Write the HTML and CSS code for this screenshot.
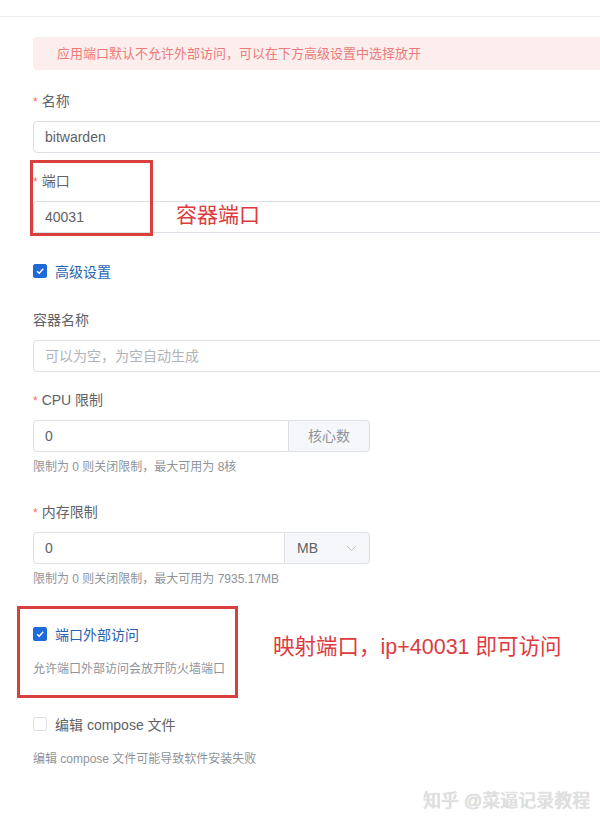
FILE: index.html
```html
<!DOCTYPE html>
<html lang="zh">
<head>
<meta charset="utf-8">
<link rel="stylesheet" href="styles.css">
</head>
<body>
<div class="topbar"></div>
<div class="page">
  <div class="alert">应用端口默认不允许外部访问，可以在下方高级设置中选择放开</div>

  <div class="item item-first">
    <div class="label"><span class="star">*</span>名称</div>
    <div class="input"><span class="val">bitwarden</span></div>
  </div>

  <div class="item">
    <div class="label"><span class="star">*</span>端口</div>
    <div class="input"><span class="val">40031</span></div>
  </div>

  <div class="check check-adv">
    <span class="box on"><svg width="10" height="10" viewBox="0 0 10 10"><path d="M2 5.2 L4.2 7.3 L8.2 2.8" fill="none" stroke="#fff" stroke-width="1.4"/></svg></span>
    <span class="check-text on">高级设置</span>
  </div>

  <div class="item item-cname">
    <div class="label">容器名称</div>
    <div class="input"><span class="ph">可以为空，为空自动生成</span></div>
  </div>

  <div class="item">
    <div class="label"><span class="star">*</span>CPU 限制</div>
    <div class="group">
      <div class="ginput"><span class="val">0</span></div>
      <div class="append">核心数</div>
    </div>
    <div class="help">限制为 0 则关闭限制，最大可用为 8核</div>
  </div>

  <div class="item item-mem">
    <div class="label"><span class="star">*</span>内存限制</div>
    <div class="group">
      <div class="ginput"><span class="val">0</span></div>
      <div class="select"><span>MB</span><svg width="11" height="7" viewBox="0 0 11 7"><path d="M1 1 L5.5 5.5 L10 1" fill="none" stroke="#c0c4cc" stroke-width="1"/></svg></div>
    </div>
    <div class="help">限制为 0 则关闭限制，最大可用为 7935.17MB</div>
  </div>

  <div class="check check-ext">
    <span class="box on"><svg width="10" height="10" viewBox="0 0 10 10"><path d="M2 5.2 L4.2 7.3 L8.2 2.8" fill="none" stroke="#fff" stroke-width="1.4"/></svg></span>
    <span class="check-text on">端口外部访问</span>
  </div>
  <div class="help help-check">允许端口外部访问会放开防火墙端口</div>

  <div class="check check-compose">
    <span class="box"></span>
    <span class="check-text">编辑 compose 文件</span>
  </div>
  <div class="help help-check">编辑 compose 文件可能导致软件安装失败</div>

  <div class="mark mark-port"></div>
  <div class="note note-port">容器端口</div>
  <div class="mark mark-ext"></div>
  <div class="note note-ext">映射端口，ip+40031 即可访问</div>
  <div class="watermark">知乎 @菜逼记录教程</div>
</div>
</body>
</html>
```
FILE: styles.css
```css
html, body {
  margin: 0;
  padding: 0;
  background: #fff;
  overflow: hidden;
  width: 600px;
  height: 828px;
}
body {
  font-family: "Liberation Sans", "Noto Sans CJK SC", sans-serif;
  color: #606266;
}
.topbar {
  height: 16px;
  border-bottom: 1px solid #eceef2;
}
.page {
  position: relative;
  width: 640px;
  padding-left: 33px;
  padding-top: 20px;
  height: 791px;
}
.alert {
  height: 33px;
  line-height: 33px;
  background: #fdeeee;
  border-radius: 4px;
  color: #ec7a7a;
  font-size: 13px;
  padding-left: 24px;
}
.item {
  margin-top: 18px;
}
.item-first {
  margin-top: 21px;
}
.item-cname {
  margin-top: 29px;
}
.item-mem {
  margin-top: 26px;
}
.label {
  height: 20px;
  line-height: 20px;
  font-size: 14px;
  margin-bottom: 10px;
  color: #606266;
}
.star {
  color: #f56c6c;
  margin-right: 4px;
  font-size: 12px;
}
.input {
  height: 30px;
  border: 1px solid #dcdfe6;
  border-radius: 4px;
  line-height: 30px;
  padding-left: 11px;
  font-size: 14px;
}
.val {
  color: #606266;
}
.ph {
  color: #b0b3b9;
}
.check {
  display: flex;
  align-items: center;
  height: 20px;
  gap: 8px;
}
.check-adv {
  margin-top: 28px;
}
.check-ext {
  margin-top: 36px;
}
.check-compose {
  margin-top: 36px;
}
.box {
  width: 12px;
  height: 12px;
  border: 1px solid #dcdfe6;
  border-radius: 2px;
  background: #fff;
  display: flex;
  align-items: center;
  justify-content: center;
}
.box.on {
  background: #1f6ad9;
  border-color: #1f6ad9;
}
.check-text {
  font-size: 14px;
  color: #606266;
}
.check-text.on {
  color: #2a62b0;
}
.group {
  display: flex;
  width: 337px;
  height: 32px;
}
.ginput {
  flex: 1;
  border: 1px solid #dcdfe6;
  border-radius: 4px 0 0 4px;
  line-height: 30px;
  padding-left: 11px;
  font-size: 14px;
}
.append {
  width: 80px;
  border: 1px solid #dcdfe6;
  border-left: none;
  border-radius: 0 4px 4px 0;
  background: #f5f7fa;
  color: #909399;
  font-size: 14px;
  line-height: 30px;
  text-align: center;
}
.select {
  width: 60px;
  border: 1px solid #dcdfe6;
  border-left: none;
  border-radius: 0 4px 4px 0;
  background: #f5f7fa;
  color: #606266;
  font-size: 14px;
  display: flex;
  align-items: center;
  justify-content: space-between;
  padding: 0 12px 0 12px;
}
.help {
  margin-top: 6px;
  line-height: 18px;
  font-size: 12px;
  color: #909399;
}
.help-check {
  margin-top: 16px;
}
.mark {
  position: absolute;
  border: 3px solid #d9403d;
  box-sizing: border-box;
}
.mark-port {
  left: 30px;
  top: 143px;
  width: 123px;
  height: 76px;
}
.mark-ext {
  left: 17px;
  top: 589px;
  width: 221px;
  height: 92px;
}
.note {
  position: absolute;
  color: #dd3b3e;
  font-size: 21px;
  line-height: 24px;
  font-family: "Noto Sans CJK SC", sans-serif;
}
.note-port {
  left: 176px;
  top: 184px;
}
.note-ext {
  left: 273px;
  top: 618px;
  font-size: 21.5px;
  font-family: "Liberation Sans", "Noto Sans CJK SC", sans-serif;
}
.watermark {
  position: absolute;
  left: 423px;
  top: 772px;
  font-size: 18px;
  line-height: 24px;
  color: #e2e2e2;
  text-shadow: 0 0 1px #b8b8b8;
}
```
